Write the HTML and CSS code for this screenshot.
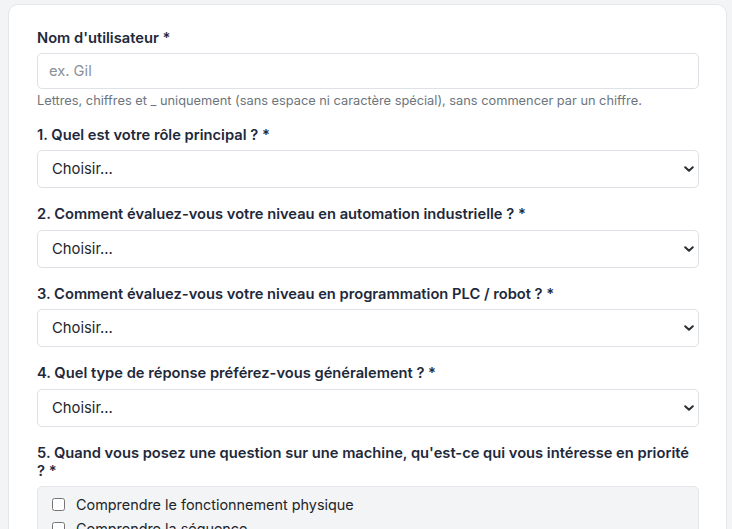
FILE: index.html
```html
<!DOCTYPE html>
<html lang="fr">
<head>
<meta charset="utf-8">
<title>Profil</title>
<link rel="stylesheet" href="styles.css">
</head>
<body>
<div class="card">
  <div class="group first">
    <label class="label first-label" for="user">Nom d'utilisateur *</label>
    <input class="input" id="user" type="text" placeholder="ex. Gil">
    <div class="help">Lettres, chiffres et _ uniquement (sans espace ni caractère spécial), sans commencer par un chiffre.</div>
  </div>
  <div class="group">
    <label class="label" for="q1">1. Quel est votre rôle principal ? *</label>
    <div class="select-wrap">
      <select class="select" id="q1"><option>Choisir...</option></select>
      <svg class="chev" viewBox="0 0 10 6" width="10" height="6"><path d="M1.2 1.2L5 4.8 8.8 1.2" fill="none" stroke="#2b2f36" stroke-width="2" stroke-linecap="round" stroke-linejoin="round"/></svg>
    </div>
  </div>
  <div class="group">
    <label class="label" for="q2">2. Comment évaluez-vous votre niveau en automation industrielle ? *</label>
    <div class="select-wrap">
      <select class="select" id="q2"><option>Choisir...</option></select>
      <svg class="chev" viewBox="0 0 10 6" width="10" height="6"><path d="M1.2 1.2L5 4.8 8.8 1.2" fill="none" stroke="#2b2f36" stroke-width="2" stroke-linecap="round" stroke-linejoin="round"/></svg>
    </div>
  </div>
  <div class="group">
    <label class="label" for="q3">3. Comment évaluez-vous votre niveau en programmation PLC / robot ? *</label>
    <div class="select-wrap">
      <select class="select" id="q3"><option>Choisir...</option></select>
      <svg class="chev" viewBox="0 0 10 6" width="10" height="6"><path d="M1.2 1.2L5 4.8 8.8 1.2" fill="none" stroke="#2b2f36" stroke-width="2" stroke-linecap="round" stroke-linejoin="round"/></svg>
    </div>
  </div>
  <div class="group">
    <label class="label" for="q4">4. Quel type de réponse préférez-vous généralement ? *</label>
    <div class="select-wrap">
      <select class="select" id="q4"><option>Choisir...</option></select>
      <svg class="chev" viewBox="0 0 10 6" width="10" height="6"><path d="M1.2 1.2L5 4.8 8.8 1.2" fill="none" stroke="#2b2f36" stroke-width="2" stroke-linecap="round" stroke-linejoin="round"/></svg>
    </div>
  </div>
  <div class="group">
    <div class="label">5. Quand vous posez une question sur une machine, qu'est-ce qui vous intéresse en priorité ? *</div>
    <div class="checks">
      <label class="check"><input type="checkbox"><span>Comprendre le fonctionnement physique</span></label>
      <label class="check"><input type="checkbox"><span>Comprendre la séquence</span></label>
    </div>
  </div>
</div>
</body>
</html>
```
FILE: styles.css
```css
* { box-sizing: border-box; }
html, body { margin: 0; padding: 0; }
body {
  background: #f3f4f6;
  font-family: Inter, "Noto Sans", sans-serif;
  color: #1f2937;
  overflow: hidden;
}
.card {
  margin: 4px 5px 0 8px;
  background: #fff;
  border: 1px solid #e5e7eb;
  border-radius: 10px;
  padding: 25px 27px 40px 28px;
}
.group { margin-bottom: 18px; }
.group.first { margin-bottom: 17px; }
.label {
  display: block;
  font-size: 14.7px;
  line-height: 17.6px;
  font-weight: 600;
  color: #1e293b;
  margin-bottom: 6px;
}
.first-label { margin-bottom: 5px; }
.input {
  display: block;
  width: 100%;
  height: 36px;
  padding: 0 11px;
  font-family: inherit;
  font-size: 14.7px;
  color: #212529;
  border: 1px solid #dee2e6;
  border-radius: 5px;
  background: #fff;
  outline: none;
}
.input::placeholder { color: #8a9097; }
.help {
  margin-top: 2px;
  font-size: 12.8px;
  line-height: 19px;
  color: #6c757d;
}
.select-wrap { position: relative; }
.select {
  display: block;
  width: 100%;
  height: 38px;
  padding: 0 36px 0 14px;
  font-family: inherit;
  font-size: 14.8px;
  color: #212529;
  border: 1px solid #dee2e6;
  border-radius: 5px;
  background: #fff;
  appearance: none;
  -webkit-appearance: none;
  outline: none;
}
.chev {
  position: absolute;
  right: 5px;
  top: 16px;
  pointer-events: none;
}
.checks {
  background: #f3f4f6;
  border: 1px solid #e5e7eb;
  border-radius: 5px;
  padding: 7px 14px;
  display: flex;
  flex-direction: column;
  gap: 2px;
}
.check {
  display: flex;
  align-items: center;
  gap: 11px;
  font-size: 14.4px;
  line-height: 21.6px;
  color: #212529;
}
.check input {
  margin: 0;
  width: 13px;
  height: 13px;
}
```
